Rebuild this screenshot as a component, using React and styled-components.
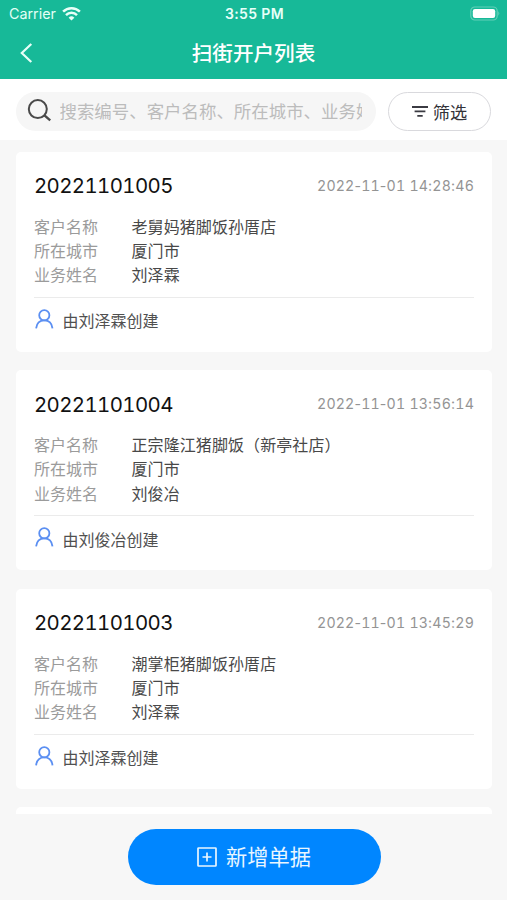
import React from 'react';
import styled, { createGlobalStyle } from 'styled-components';

const GlobalStyle = createGlobalStyle`
  * { box-sizing: border-box; }
  body {
    margin: 0;
    background: #f7f7f7;
    font-family: Inter, "Noto Sans CJK SC", sans-serif;
    font-size: 16px;
    color: #333;
  }
`;

const Screen = styled.div`
  display: flex;
  flex-direction: column;
  width: 507px;
  height: 900px;
  overflow: hidden;
  background: #f7f7f7;
`;

const Header = styled.header`
  flex: none;
  height: 79px;
  background: #17b998;
  color: #fff;
`;

const StatusBar = styled.div`
  display: grid;
  grid-template-columns: 1fr auto 1fr;
  align-items: center;
  height: 27px;
  padding: 0 7px 0 9px;
  line-height: 27px;
`;

const Carrier = styled.div`
  display: flex;
  align-items: center;
  gap: 6px;
  font-size: 14.3px;
  color: #e3fff6;
`;

const Clock = styled.div`
  font-size: 14px;
  font-weight: 600;
  letter-spacing: 0.35px;
  color: #e8fff8;
`;

const Battery = styled.svg`
  justify-self: end;
`;

const TitleBar = styled.div`
  display: grid;
  grid-template-columns: 1fr auto 1fr;
  align-items: center;
  height: 52px;
  padding: 0 20px;
`;

const Title = styled.h1`
  margin: 0;
  padding-top: 1px;
  font-size: 20.6px;
  line-height: 30px;
  font-weight: 500;
`;

const Toolbar = styled.div`
  flex: none;
  display: flex;
  align-items: center;
  gap: 12px;
  height: 61px;
  padding: 3px 16px 0;
  background: #fff;
`;

const SearchBox = styled.div`
  flex: 1;
  display: flex;
  align-items: center;
  gap: 7.5px;
  min-width: 0;
  height: 39px;
  padding: 0 14px 0 11px;
  border-radius: 20px;
  background: #f6f6f6;
`;

const Placeholder = styled.div`
  flex: 1;
  min-width: 0;
  padding-top: 1px;
  overflow: hidden;
  white-space: nowrap;
  font-size: 17.45px;
  line-height: 26px;
  color: #bcbcbc;
`;

const FilterButton = styled.div`
  display: flex;
  align-items: center;
  justify-content: center;
  gap: 5px;
  width: 103px;
  height: 39px;
  border: 1px solid #d9d9dd;
  border-radius: 20px;
  font-size: 17.2px;
  color: #333339;
`;

const List = styled.main`
  flex: none;
  display: flex;
  flex-direction: column;
  gap: 18.5px;
  height: 674px;
  padding: 11.6px 15px 0 16px;
  overflow: hidden;
`;

const Card = styled.article`
  flex: none;
  height: 200px;
  padding: 18px 18px 0;
  border-radius: 5px;
  background: #fff;
`;

const CardHead = styled.div`
  display: flex;
  align-items: center;
  justify-content: space-between;
  height: 32px;
`;

const OrderNo = styled.div`
  font-size: 20.4px;
  font-variant-numeric: tabular-nums;
  letter-spacing: -0.6px;
  color: #111;
`;

const Time = styled.div`
  margin-top: -1px;
  font-size: 14.2px;
  letter-spacing: 0.15px;
  white-space: pre;
  color: #949494;
`;

const Digits = styled.span`
  font-variant-numeric: tabular-nums;
`;

const Fields = styled.dl`
  display: grid;
  grid-template-columns: 97.5px 1fr;
  grid-auto-rows: 24.4px;
  align-items: center;
  height: 83px;
  margin: 0;
  padding-top: 13px;
  line-height: 24.4px;
`;

const Label = styled.dt`
  color: #9b9b9b;
`;

const Value = styled.dd`
  margin: 0;
  letter-spacing: 0.08px;
  white-space: nowrap;
  color: #484848;
`;

const Creator = styled.div`
  display: flex;
  align-items: center;
  gap: 8.5px;
  height: 46px;
  margin-top: 12px;
  border-top: 1px solid #ebebeb;
  color: #505050;

  svg {
    margin-top: -3px;
  }
`;

const Footer = styled.footer`
  flex: 1;
  display: flex;
  justify-content: center;
  align-items: flex-start;
  padding: 15px 0 0 1px;
`;

const AddButton = styled.div`
  display: flex;
  align-items: center;
  justify-content: center;
  gap: 9px;
  width: 253px;
  height: 56px;
  border-radius: 28px;
  background: #0086ff;
  font-size: 21.2px;
  line-height: 30px;
  color: #e9f6ff;
`;

const WifiIcon = () => (
  <svg width="19" height="14" viewBox="0 0 19 14" fill="none" stroke="#e8fff8" strokeWidth="2.5">
    <path d="M1.1 4.7 A12 12 0 0 1 17.9 4.7" />
    <path d="M4 8.1 A7.8 7.8 0 0 1 15 8.1" />
    <path d="M6.6 10.7 A4.1 4.1 0 0 1 12.4 10.7 L9.5 13.6 Z" fill="#e8fff8" stroke="none" />
  </svg>
);

const BatteryIcon = () => (
  <Battery width="30" height="15" viewBox="0 0 30 15">
    <rect x="0.8" y="1" width="26.4" height="13" rx="4" fill="none" stroke="#63cfb7" strokeWidth="1.2" />
    <rect x="2.8" y="3" width="22.4" height="9" rx="2.2" fill="#fff" />
    <path d="M28.3 5.3 Q30.3 7.5 28.3 9.7 Z" fill="#63cfb7" />
  </Battery>
);

const BackIcon = () => (
  <svg width="13" height="20" viewBox="0 0 13 20" fill="none" stroke="#e8fff8" strokeWidth="2.2">
    <path d="M11.3 1 L1.8 10 L11.3 19" />
  </svg>
);

const SearchIcon = () => (
  <svg width="25" height="24" viewBox="0 0 25 24" fill="none" stroke="#4a4a4a" strokeWidth="2">
    <circle cx="10.8" cy="10.1" r="9" />
    <path d="M17.2 16.2 L23.2 21.4" strokeWidth="2.4" />
  </svg>
);

const FilterIcon = () => (
  <svg width="16" height="12" viewBox="0 0 16 12" fill="none" stroke="#3b3b42" strokeWidth="1.9">
    <path d="M0 2 H16 M2.6 6.4 H13.4 M5.3 10.9 H10.7" />
  </svg>
);

const UserIcon = () => (
  <svg width="20" height="20" viewBox="0 0 20 20" fill="none" stroke="#5b8ff2" strokeWidth="1.8">
    <circle cx="10.3" cy="6.2" r="5.1" />
    <path d="M2.1 19.4 C2.7 14.2 5.7 11.4 10.3 11.4 C14.9 11.4 17.9 14.2 18.5 19.4" />
  </svg>
);

const AddIcon = () => (
  <svg width="20" height="20" viewBox="0 0 20 20" fill="none" stroke="#e9f6ff" strokeWidth="1.7">
    <rect x="1" y="1" width="18" height="18" rx="0.6" />
    <path d="M10 5.5 V14.5 M5.5 10 H14.5" />
  </svg>
);

const records = [
  { no: '20221101005', time: '2022-11-01 14:28:46', customer: '老舅妈猪脚饭孙厝店', city: '厦门市', sales: '刘泽霖' },
  { no: '20221101004', time: '2022-11-01 13:56:14', customer: '正宗隆江猪脚饭（新亭社店）', city: '厦门市', sales: '刘俊冶' },
  { no: '20221101003', time: '2022-11-01 13:45:29', customer: '潮掌柜猪脚饭孙厝店', city: '厦门市', sales: '刘泽霖' },
];

// Digits share one width so that the times line up; separators keep their own.
const Timestamp = ({ value }) => (
  <Time>
    {value.split(/(\d+)/).map((part, i) => (i % 2 ? <Digits key={i}>{part}</Digits> : part))}
  </Time>
);

const RecordCard = ({ record }) => (
  <Card>
    <CardHead>
      <OrderNo>{record.no}</OrderNo>
      <Timestamp value={record.time} />
    </CardHead>
    <Fields>
      <Label>客户名称</Label>
      <Value>{record.customer}</Value>
      <Label>所在城市</Label>
      <Value>{record.city}</Value>
      <Label>业务姓名</Label>
      <Value>{record.sales}</Value>
    </Fields>
    <Creator>
      <UserIcon />
      <span>由{record.sales}创建</span>
    </Creator>
  </Card>
);

export default function App() {
  return (
    <Screen>
      <GlobalStyle />
      <Header>
        <StatusBar>
          <Carrier>
            Carrier
            <WifiIcon />
          </Carrier>
          <Clock>3:55 PM</Clock>
          <BatteryIcon />
        </StatusBar>
        <TitleBar>
          <BackIcon />
          <Title>扫街开户列表</Title>
        </TitleBar>
      </Header>
      <Toolbar>
        <SearchBox>
          <SearchIcon />
          <Placeholder>搜索编号、客户名称、所在城市、业务姓名</Placeholder>
        </SearchBox>
        <FilterButton>
          <FilterIcon />
          筛选
        </FilterButton>
      </Toolbar>
      <List>
        {records.map((record) => (
          <RecordCard key={record.no} record={record} />
        ))}
        <Card />
      </List>
      <Footer>
        <AddButton>
          <AddIcon />
          <span>新增单据</span>
        </AddButton>
      </Footer>
    </Screen>
  );
}
